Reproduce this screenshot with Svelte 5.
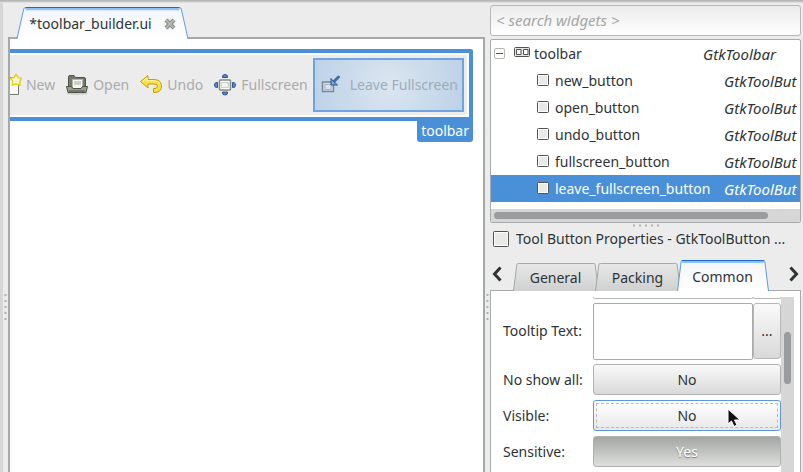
<script>
  const tools = [
    { id: 'new', label: 'New' },
    { id: 'open', label: 'Open' },
    { id: 'undo', label: 'Undo' },
    { id: 'fullscreen', label: 'Fullscreen' },
    { id: 'leave', label: 'Leave Fullscreen' }
  ];
  const widgets = ['new_button', 'open_button', 'undo_button', 'fullscreen_button', 'leave_fullscreen_button'];
  const tabs = ['General', 'Packing', 'Common'];
  let selectedTool = $state('leave');
  let selectedWidget = $state('leave_fullscreen_button');
  let activeTab = $state('Common');
  let noShowAll = $state(false);
  let visible = $state(false);
  let sensitive = $state(true);
  const yesNo = (v) => (v ? 'Yes' : 'No');
</script>

{#snippet box(size)}
  <svg class="box" width={size} height={size} viewBox="0 0 {size} {size}" aria-hidden="true">
    <rect x="0.5" y="0.5" width={size - 1} height={size - 1} rx="1" fill="#e9e9e8" stroke="#51534f" />
    <rect x="1.5" y="1.5" width={size - 3} height={size - 3} fill="none" stroke="#fff" />
  </svg>
{/snippet}

{#snippet toolIcon(id)}
  <svg width="24" height="24" viewBox="0 0 24 24" aria-hidden="true">
    {#if id === 'new'}
      <path d="M6.500 4.500h14v17h-14z" fill="#fafafa" stroke="#777a72" />
      <path d="M18 1.500l2.300 3 3.200.8-1.700 3 .4 3.700-4.200-1-3.700 1 .3-3.700-2-3 3.400-.8z" fill="#fffbd0" stroke="#e8cf1c" stroke-width="1.500" />
    {:else if id === 'open'}
      <ellipse cx="12" cy="20.500" rx="11" ry="1.500" fill="#cfcfcd" />
      <path d="M3.500 16V4q0-1.500 1.500-1.500h4l1.500 2H19q1.500 0 1.500 1.500v10z" fill="#74796a" stroke="#4d5149" />
      <path d="M7.500 6.500h10v9h-10z" fill="#f5f5f3" stroke="#b4b6ad" />
      <path d="M9 9h7M9 11h7" stroke="#a8aaa3" />
      <path d="M1.500 13.500h5l1.500 2h8l1.500-2h5l-1.500 6h-18z" fill="#999e8d" stroke="#4d5149" />
      <path d="M4 18h16" stroke="#72776a" stroke-width="2" />
    {:else if id === 'undo'}
      <path d="M1.500 8.500l7.500-6v4h6q7 0 7.500 6.500.2 6-6.500 6.500h-1.500v-4h1.500q2.500-.3 2.500-2.500-.2-2-3.500-2H9v4z" fill="#f8df49" stroke="#c4a000" />
      <path d="M3.500 8.500l4.500-3.500v2.700h7q5 0 6 4" fill="none" stroke="#fff3a2" />
    {:else if id === 'fullscreen'}
      <g fill="#5f8dca" stroke="#2c5592">
        <path d="M9.500 4.500q-.5-3 2.500-3t2.500 3zM9.500 19q-.5 3 2.500 3t2.500-3zM4.500 9.500q-3-.5-3 2.500t3 2.500zM19.500 9.500q3-.5 3 2.500t-3 2.500z" />
      </g>
      <rect x="6.500" y="7" width="11" height="10" rx="1" fill="#fff" stroke="#888a85" stroke-width="1.500" />
      <path d="M8.500 9.500h7v5h-7z" fill="#f4f4f1" stroke="#cccec8" />
      <path d="M14 9.500l2 2" stroke="#b7b9b3" />
    {:else}
      <path d="M2.500 9h11v9.500h-11z" fill="#d2dde8" stroke="#7a8793" stroke-width="1.500" />
      <path d="M5 11.500h6v5H5z" fill="#d8e5f0" stroke="#a5b4c3" />
      <path d="M18.500 4l-5 5" stroke="#3f70ae" stroke-width="3" stroke-linecap="round" />
      <path d="M11 5.500v6.500h6.500l-2.500-2.300-2-1.800z" fill="#7ca3d4" stroke="#2c5592" />
    {/if}
  </svg>
{/snippet}

{#snippet tabShape(active)}
  <svg class="shape" viewBox="0 0 90 30" preserveAspectRatio="none" aria-hidden="true">
    <defs>
      <linearGradient id={active ? 'tab-on' : 'tab-off'} x2="0" y2="1">
        <stop offset="0" stop-color={active ? '#f3f5f8' : '#e8e8e8'} />
        <stop offset="1" stop-color={active ? '#fff' : '#cfd0d0'} />
      </linearGradient>
    </defs>
    <path d="M0.500 30L4 2q0-1.500 1.500-1.500h79q1.500 0 1.500 1.500L89.500 30" fill={active ? 'url(#tab-on)' : 'url(#tab-off)'} stroke={active ? '#5c9ce0' : '#a5a8a6'} vector-effect="non-scaling-stroke" />
    {#if active}
      <path d="M5 2h80" stroke="#8ec1f5" stroke-width="2" />
      <path d="M5 .5h80" stroke="#1b6acb" />
    {/if}
  </svg>
{/snippet}

{#snippet toggle(id, value, flip)}
  <button {id} type="button" class="toggle" class:pressed={value} class:focused={id === 'visible'} aria-pressed={value} onclick={flip}>{yesNo(value)}</button>
{/snippet}

<main>
  <div class="edge"></div>
  <div class="grip vertical"></div>
  <section class="editor" aria-label="Editor">
    <div class="file-tabs">
      <div class="tab file active">
        {@render tabShape(true)}
        <span>*toolbar_builder.ui</span>
        <button type="button" class="close" aria-label="Close">
          <svg width="12" height="12" viewBox="0 0 12 12"><path d="M2 2l8 8m0-8l-8 8" stroke="#7f817e" stroke-width="4" /><path d="M2 2l8 8m0-8l-8 8" stroke="#b9bab6" stroke-width="2" /></svg>
        </button>
      </div>
    </div>
    <div class="canvas">
      <div class="widget">
        <div class="toolbar" role="toolbar">
          {#each tools as t}
            <button type="button" class:selected={selectedTool === t.id} onclick={() => (selectedTool = t.id)}>
              {@render toolIcon(t.id)}{t.label}
            </button>
          {/each}
        </div>
      </div>
      <div class="name-tag">toolbar</div>
    </div>
  </section>
  <div class="grip vertical"></div>

  <aside>
    <input class="search" type="text" aria-label="Search widgets" placeholder="&lt; search widgets &gt;" />
    <div class="tree">
      <ul>
        <li class="root">
          <button type="button" class="expander" aria-label="Collapse toolbar"></button>
          <span class="icon">
            <svg width="16" height="11" viewBox="0 0 16 11"><rect x=".5" y=".5" width="15" height="9" rx="1" fill="#e5e5e3" stroke="#51534f" /><path d="M2.500 2.500h4.500v5H2.500zM9.500 2.500H14v5H9.500z" fill="#fff" stroke="#51534f" /></svg>
          </span>
          <span class="name">toolbar</span><em>GtkToolbar</em>
        </li>
        {#each widgets as w}
          <li>
            <button type="button" class="row" class:selected={selectedWidget === w} onclick={() => (selectedWidget = w)}>
              <span class="icon">{@render box(12)}</span>
              <span class="name">{w}</span><em>GtkToolBut</em>
            </button>
          </li>
        {/each}
      </ul>
      <div class="hscroll"><div class="thumb"></div></div>
    </div>
    <div class="grip horizontal"></div>
    <h2>{@render box(16)}<span>Tool Button Properties - GtkToolButton ...</span></h2>
    <div class="prop-tabs">
      <button type="button" class="arrow" aria-label="Previous tab"><svg width="10" height="16" viewBox="0 0 10 16"><path d="M8.500 1.500L2.500 8l6 6.500" /></svg></button>
      <div class="tab-list">
        {#each tabs as t}
          <button type="button" class="tab" class:active={activeTab === t} onclick={() => (activeTab = t)}>
            {@render tabShape(activeTab === t)}<span>{t}</span>
          </button>
        {/each}
      </div>
      <button type="button" class="arrow" aria-label="Next tab"><svg width="10" height="16" viewBox="0 0 10 16"><path d="M1.500 1.500l6 6.500-6 6.500" /></svg></button>
    </div>
    <div class="panel">
      <form>
        <div class="above"><i></i><i></i></div>
        <div class="field">
          <label for="tooltip">Tooltip Text:</label>
          <div class="text"><textarea id="tooltip"></textarea><button type="button" aria-label="Edit tooltip text">...</button></div>
        </div>
        <div class="field">
          <label for="show-all">No show all:</label>
          {@render toggle('show-all', noShowAll, () => (noShowAll = !noShowAll))}
        </div>
        <div class="field">
          <label for="visible">Visible:</label>
          {@render toggle('visible', visible, () => (visible = !visible))}
          <svg class="pointer" width="14" height="20" viewBox="0 0 14 20" aria-hidden="true"><path d="M1 1v15l3.500-3 2.500 5.500 3-1.500-2.500-5H13z" fill="#111" stroke="#fff" /></svg>
        </div>
        <div class="field">
          <label for="sensitive">Sensitive:</label>
          {@render toggle('sensitive', sensitive, () => (sensitive = !sensitive))}
        </div>
      </form>
      <div class="vscroll"><div class="thumb"></div></div>
    </div>
  </aside>
</main>

<style>
  :global(body) { margin: 0; }
  main, main * { box-sizing: border-box; }
  main {
    display: grid;
    grid-template-columns: 3px 5px minmax(0, 1fr) 5px 311px;
    height: 100vh;
    padding: 3px 2px 0 0;
    overflow: hidden;
    background: linear-gradient(#b4b8b6 0 1px, #ececec 3px);
    color: #2e3436;
    font: 14px/20px "Noto Sans", "Open Sans", sans-serif;
  }
  button, input, textarea { font: inherit; color: inherit; }
  button { margin: 0; padding: 0; border: 0; background: none; white-space: nowrap; }
  svg { display: block; flex: none; }
  .edge { background: #d6d6d6; }
  .grip { background: radial-gradient(circle, #b0b0ad 0 1px, transparent 1px) center / 6px 6px; }
  .grip.vertical { width: 5px; height: 30px; margin-top: 289px; }
  .grip.horizontal { width: 30px; height: 5px; margin: 0 auto; flex: none; }

  .editor { display: flex; flex-direction: column; min-width: 0; }
  .file-tabs { display: flex; padding: 4px 8px 0; }
  .tab { position: relative; display: flex; align-items: center; justify-content: center; height: 28px; padding-top: 2px; }
  .tab > span { position: relative; }
  .shape { position: absolute; inset: 0; width: 100%; height: 100%; }
  .file { width: 173px; height: 32px; gap: 12px; margin-bottom: -2px; }
  .close { position: relative; }
  .canvas {
    flex: 1;
    display: flex;
    flex-direction: column;
    align-items: flex-end;
    overflow: hidden;
    padding: 10px 10px 0 0;
    border: solid #a5a9a7;
    border-width: 2px 2px 0;
    background: #fff;
  }
  .widget { border: 4px solid #4a90d9; border-radius: 2px 2px 0 0; padding: 2px; }
  .toolbar { display: flex; height: 60px; padding: 3px; background: #ececec; }
  .toolbar button {
    display: flex;
    align-items: center;
    gap: 4px;
    padding: 0 5px;
    color: #a9abac;
    border: 2px solid transparent;
    border-width: 2px 0;
  }
  .toolbar button.selected {
    gap: 6px;
    padding: 0 4px 0 5px;
    border: 2px solid #6fa4df;
    background: radial-gradient(circle, #dbe6f0, #bdd1e8);
    color: #9dacb8;
  }
  .name-tag { height: 21px; padding: 0 4px; border-radius: 0 0 3px 3px; background: #4a90d9; color: #fff; }

  aside { display: flex; flex-direction: column; min-width: 0; padding-top: 2px; }
  .search {
    width: 100%;
    height: 31px;
    flex: none;
    padding: 0 5px;
    border: 1px solid #b5b8b6;
    border-radius: 3px;
    background: linear-gradient(#ebebeb, #fff);
  }
  .search::placeholder { color: #a5a8a6; font-size: 15px; font-style: italic; opacity: 1; }
  .tree { flex: none; margin-top: 3px; border: 1px solid #a8aba9; border-radius: 2px; background: #fff; overflow: hidden; }
  ul { list-style: none; margin: 0 0 7px; padding: 0; overflow: hidden; }
  li { height: 27px; }
  em { font-size: 15px; }
  .root, .row { display: flex; align-items: center; height: 27px; width: 100%; }
  .root { padding-left: 3px; }
  .row { padding-left: 46px; text-align: left; }
  .row.selected { background: #4a90d9; color: #fff; }
  .expander { width: 11px; height: 11px; margin-right: 9px; border: 1px solid #b5b6b0; border-radius: 2px; background: linear-gradient(#555, #555) center / 7px 1px no-repeat; }
  .icon { width: 20px; flex: none; padding-bottom: 2px; }
  .row .icon { width: 18px; }
  .name { width: 169px; flex: none; }
  .hscroll { height: 13px; padding: 3px 32px 3px 3px; background: #d6d6d6; }
  .thumb { border-radius: 4px; background: #9b9c9e; }
  .hscroll .thumb { height: 7px; }
  h2 { display: flex; align-items: center; gap: 7px; height: 22px; margin: 0; padding-left: 3px; font: inherit; white-space: nowrap; flex: none; }
  .prop-tabs { display: flex; align-items: center; height: 41px; flex: none; justify-content: space-between; position: relative; padding: 10px 2px 0; margin-bottom: -1px; }
  .arrow { padding-bottom: 4px; }
  .arrow path { fill: none; stroke: #2e3436; stroke-width: 3; }
  .tab-list { display: flex; align-items: flex-end; height: 31px; margin-right: 10px; }
  .tab-list .tab { width: 86px; margin-right: -4px; }
  .tab-list .tab.active { width: 92px; height: 31px; z-index: 1; margin-right: 0; }
  .panel { display: flex; flex: 1; min-height: 0; padding: 6px 6px 0 12px; border: 1px solid #a8aba9; border-bottom: 0; background: #fff; overflow: hidden; }
  form { flex: 1; min-width: 0; display: flex; flex-direction: column; gap: 5px; }
  .above { display: flex; height: 2px; padding-left: 90px; margin-bottom: -1px; flex: none; }
  .above i { flex: 1; border: 1px solid #b5b8b6; border-top: 0; border-radius: 0 0 2px 2px; }
  .above i:last-child { flex: 0 0 28px; }
  .field { position: relative; display: grid; grid-template-columns: 90px minmax(0, 1fr); align-items: center; flex: none; }
  .text { display: flex; height: 57px; margin-bottom: -1px; }
  textarea { flex: 1; min-width: 0; resize: none; border: 1px solid #a8aba9; border-radius: 2px; background: #fff; }
  .text button { width: 28px; height: 56px; border: 1px solid #b5b8b6; border-radius: 3px; background: linear-gradient(#fafafa, #d9d9d9); }
  .toggle { height: 31px; border: 1px solid #b0b3b1; border-radius: 3px; background: linear-gradient(#fafafa, #d9d9d9); }
  .toggle.focused { border-color: #5f98d8; background: linear-gradient(#fff, #e8e8e8); outline: 1px dashed #b9b9b9; outline-offset: -4px; }
  .toggle.pressed { color: #fff; text-shadow: 0 1px 1px #777; background: linear-gradient(#a3a7a4, #dededd); }
  .pointer { position: absolute; right: 40px; top: 8px; }
  .vscroll { width: 13px; padding: 35px 3px 0; background: #d6d6d6; }
  .vscroll .thumb { height: 52px; }
</style>
